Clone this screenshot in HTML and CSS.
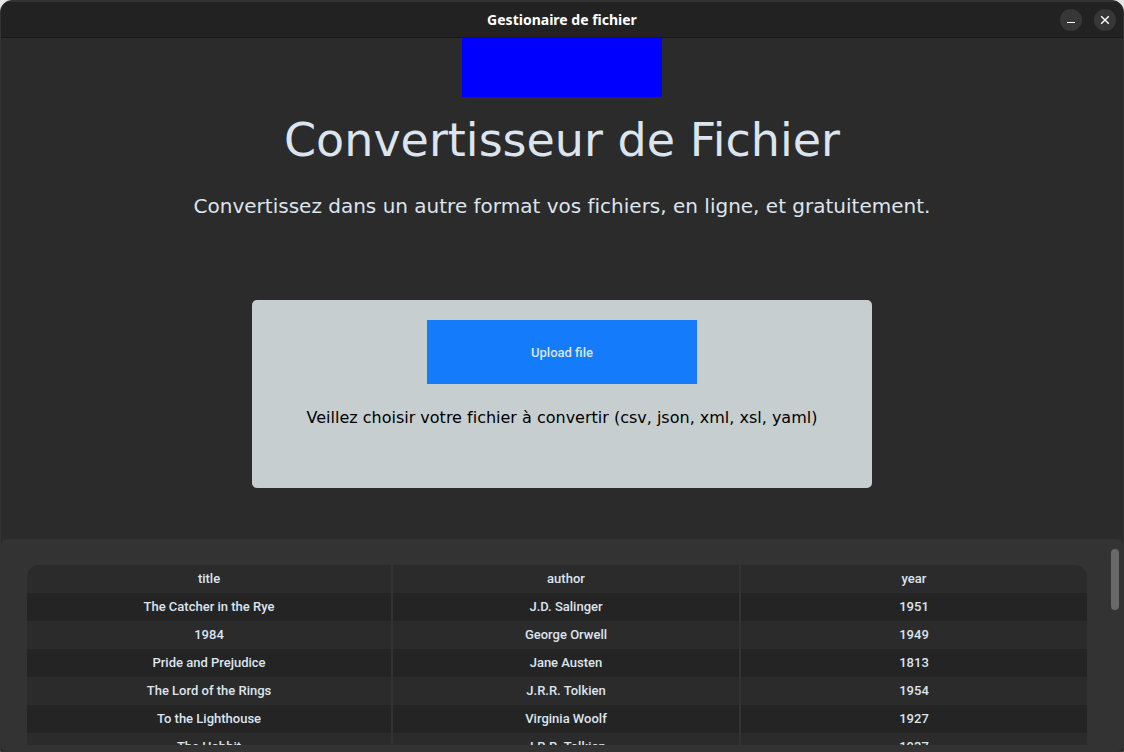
FILE: index.html
```html
<!DOCTYPE html>
<html lang="fr">
<head>
<meta charset="utf-8">
<title>Gestionaire de fichier</title>
<link rel="stylesheet" href="styles.css">
</head>
<body>
<div class="window">
  <header class="titlebar">
    <span class="titlebar-text">Gestionaire de fichier</span>
    <div class="controls">
      <button class="control" type="button" aria-label="Réduire">
        <svg width="22" height="22" viewBox="0 0 22 22"><path d="M7 13.5h8" stroke="#fff" stroke-width="1"/></svg>
      </button>
      <button class="control" type="button" aria-label="Fermer">
        <svg width="22" height="22" viewBox="0 0 22 22"><path d="M7.2 7.2l7.6 7.6M14.8 7.2l-7.6 7.6" stroke="#fff" stroke-width="1.4"/></svg>
      </button>
    </div>
  </header>
  <main class="content">
    <div class="banner"></div>
    <h1 class="title">Convertisseur de Fichier</h1>
    <p class="subtitle">Convertissez dans un autre format vos fichiers, en ligne, et gratuitement.</p>
    <section class="upload">
      <button class="upload-button" type="button">Upload file</button>
      <p class="upload-hint">Veillez choisir votre fichier à convertir (csv, json, xml, xsl, yaml)</p>
    </section>
    <section class="panel">
      <div class="viewport">
        <table class="books">
          <colgroup><col class="col-title"><col class="col-gap"><col><col class="col-gap"><col></colgroup>
          <thead>
            <tr><th>title</th><td class="gap"></td><th>author</th><td class="gap"></td><th>year</th></tr>
          </thead>
          <tbody>
            <tr><td>The Catcher in the Rye</td><td class="gap"></td><td>J.D. Salinger</td><td class="gap"></td><td>1951</td></tr>
            <tr><td>1984</td><td class="gap"></td><td>George Orwell</td><td class="gap"></td><td>1949</td></tr>
            <tr><td>Pride and Prejudice</td><td class="gap"></td><td>Jane Austen</td><td class="gap"></td><td>1813</td></tr>
            <tr><td>The Lord of the Rings</td><td class="gap"></td><td>J.R.R. Tolkien</td><td class="gap"></td><td>1954</td></tr>
            <tr><td>To the Lighthouse</td><td class="gap"></td><td>Virginia Woolf</td><td class="gap"></td><td>1927</td></tr>
            <tr><td>The Hobbit</td><td class="gap"></td><td>J.R.R. Tolkien</td><td class="gap"></td><td>1937</td></tr>
          </tbody>
        </table>
      </div>
      <div class="scrollbar"><div class="thumb"></div></div>
    </section>
  </main>
</div>
</body>
</html>
```
FILE: styles.css
```css
* { box-sizing: border-box; }

body {
  margin: 0;
  background: #e6e6e6;
  font-variant-ligatures: none;
}

h1, p { margin: 0; }

.window {
  display: flex;
  flex-direction: column;
  height: 100vh;
  overflow: hidden;
  border: 1px solid #333333;
  border-radius: 12px 12px 0 0;
  background: #2b2b2b;
  color: #dce4ee;
}

.titlebar {
  flex: none;
  display: grid;
  grid-template-columns: 1fr auto 1fr;
  align-items: center;
  height: 37px;
  padding: 0 7px;
  border-top: 1px solid #333333;
  border-bottom: 1px solid #191919;
  background: #222222;
}

.titlebar-text {
  grid-column: 2;
  font-family: "Noto Sans", sans-serif;
  font-size: 14px;
  font-weight: bold;
  line-height: 20px;
  color: #ffffff;
}

.controls {
  display: flex;
  justify-content: flex-end;
  gap: 12px;
}

.control {
  width: 22px;
  height: 22px;
  padding: 0;
  border: 0;
  border-radius: 50%;
  background: #373737;
}

.control svg {
  display: block;
  fill: none;
}

.content {
  flex: 1;
  min-height: 0;
  display: flex;
  flex-direction: column;
  align-items: center;
}

.banner {
  flex: none;
  width: 200px;
  height: 59px;
  background: #0000ff;
}

.title,
.subtitle,
.upload-hint {
  font-family: "DejaVu Sans", sans-serif;
  font-weight: normal;
}

.title {
  margin-top: 15px;
  font-size: 46px;
  line-height: 56px;
}

.subtitle {
  margin-top: 26px;
  font-size: 20px;
  line-height: 24px;
}

.upload {
  flex: none;
  display: flex;
  flex-direction: column;
  align-items: center;
  gap: 24px;
  width: 620px;
  max-width: 100%;
  margin-top: 82px;
  padding: 20px 20px 60px;
  border-radius: 5px;
  background: #c7cecf;
}

.upload-button {
  width: 270px;
  height: 64px;
  padding: 0;
  border: 0;
  background: #147cfa;
  color: #dce4ee;
  font-family: Roboto, sans-serif;
  font-size: 13px;
  font-weight: 500;
}

.upload-hint {
  color: #000000;
  font-size: 16px;
  line-height: 20px;
}

.panel {
  flex: 1;
  min-height: 0;
  align-self: stretch;
  display: flex;
  margin-top: 51px;
  padding-bottom: 6px;
  border-radius: 6px;
  background: #333333;
}

.viewport {
  flex: 1;
  overflow: hidden;
  padding: 26px 24px 0 26px;
}

.books {
  width: 100%;
  table-layout: fixed;
  border-collapse: separate;
  border-spacing: 0;
  font-family: Roboto, sans-serif;
  font-size: 13px;
  line-height: 20px;
  text-align: center;
}

.col-title { width: 364px; }
.col-gap { width: 2px; }

.books th,
.books td {
  height: 28px;
  padding: 0;
  background: #2b2b2b;
  font-weight: 500;
}

.books tbody tr:nth-child(odd) td { background: #242424; }

.books th:first-child { border-top-left-radius: 12px; }
.books th:last-child { border-top-right-radius: 12px; }

.books tr .gap,
.books tbody tr:nth-child(odd) .gap { background: #333333; }

.scrollbar {
  flex: none;
  width: 12px;
  padding-top: 10px;
}

.thumb {
  width: 8px;
  height: 61px;
  border-radius: 4px;
  background: #696969;
}
```
